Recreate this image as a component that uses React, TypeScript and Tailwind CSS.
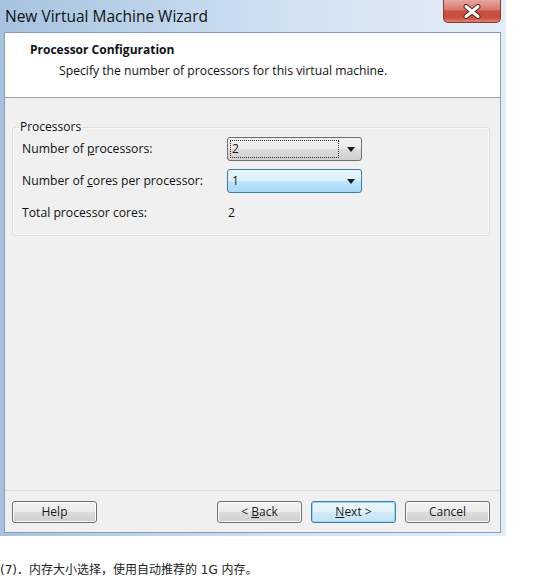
import React from 'react';

const uiFont = { fontFamily: '"Open Sans", "Noto Sans", sans-serif' };

const Arrow: React.FC = () => (
  <svg width="8" height="5" viewBox="0 0 8 5" className="shrink-0">
    <path d="M0 0h8L4 5z" fill="#1a1a1a" />
  </svg>
);

interface ComboProps {
  value: string;
  hot?: boolean;
  focused?: boolean;
}

const Combo: React.FC<ComboProps> = ({ value, hot, focused }) => (
  <div
    className={`w-[135px] h-[24px] rounded-[3px] border flex items-center pl-[2px] pr-[6px] ${
      hot
        ? 'border-[#3c7fb1] bg-[linear-gradient(#eaf6fd_0%,#d9f0fc_50%,#bee6fd_50%,#a7d9f5_100%)]'
        : 'border-[#707070] bg-[linear-gradient(#f2f2f2_0%,#ebebeb_50%,#dddddd_50%,#cfcfcf_100%)]'
    }`}
  >
    <div
      className={`flex-1 h-[18px] flex items-center pl-[1px] mr-[8px] ${
        focused ? 'border border-dotted border-[#333]' : 'border border-transparent'
      }`}
    >
      <span className="text-[12px] leading-none text-[#1a1a1a]">{value}</span>
    </div>
    <Arrow />
  </div>
);

interface ButtonProps {
  children: React.ReactNode;
  isDefault?: boolean;
}

const WinButton: React.FC<ButtonProps> = ({ children, isDefault }) => (
  <button
    className={`w-[85px] h-[22px] rounded-[3px] border text-[12px] leading-none text-[#1a1a1a] ${
      isDefault
        ? 'border-[#3c7fb1] bg-[linear-gradient(#eaf6fd_0%,#e3f2fb_50%,#d2ebf8_50%,#c4e3f4_100%)] shadow-[inset_0_0_0_1px_#9fd5f1]'
        : 'border-[#707070] bg-[linear-gradient(#f2f2f2_0%,#ebebeb_50%,#dddddd_50%,#cfcfcf_100%)] shadow-[inset_0_0_0_1px_#fcfcfc]'
    }`}
  >
    {children}
  </button>
);

const CloseButton: React.FC = () => (
  <div className="w-[58px] h-[23px] rounded-b-[5px] border border-t-0 border-[#8a3a33] bg-[linear-gradient(#e8a89f_0%,#d7776b_45%,#c74f3f_50%,#c9503f_80%,#e08070_100%)] flex items-center justify-center">
    <svg width="18" height="15" viewBox="0 0 18 15">
      <path d="M3 2.5L15 12.5M15 2.5L3 12.5" stroke="#5a2520" strokeWidth="5" strokeLinecap="round" />
      <path d="M3 2.5L15 12.5M15 2.5L3 12.5" stroke="#ffffff" strokeWidth="3" strokeLinecap="round" />
    </svg>
  </div>
);

const App: React.FC = () => {
  return (
    <div className="w-[554px] h-[582px] bg-white overflow-hidden" style={uiFont}>
      {/* Window frame */}
      <div className="w-[506px] h-[536px] flex flex-col pl-[4px] pr-[5px] pb-[3px] bg-[linear-gradient(90deg,#a6c2df_0%,#bcd3ea_30%,#d3e3f2_60%,#e2edf8_100%)]">
        {/* Title bar */}
        <div className="h-[32px] flex justify-between shrink-0">
          <div className="pl-[1px] pt-[6px] text-[15.5px] leading-[20px] text-[#111]">
            New Virtual Machine Wizard
          </div>
          <CloseButton />
        </div>

        {/* Client area */}
        <div className="flex-1 flex flex-col border border-[#8b9db2] bg-[#f0f0f0]">
          {/* Header */}
          <div className="h-[65px] bg-white border-b border-[#a0a0a0] pt-[9px] shrink-0">
            <div className="pl-[25px] text-[12px] leading-[16px] font-bold text-[#111]">
              Processor Configuration
            </div>
            <div className="pl-[54px] mt-[5px] text-[12.2px] leading-[16px] text-[#111]">
              Specify the number of processors for this virtual machine.
            </div>
          </div>

          {/* Body */}
          <div className="flex-1 pt-[21px] pl-[7px] pr-[10px]">
            <fieldset className="border border-[#d5dfe5] rounded-[3px] pt-[2px] pb-[10px] shadow-[inset_0_0_0_1px_#fafafa]">
              <legend className="ml-[6px] px-[1px] text-[12px] leading-[16px] text-[#111]">
                Processors
              </legend>
              <div className="flex flex-col gap-[8px] pl-[9px] text-[12.2px] text-[#111]">
                <div className="flex items-center h-[24px]">
                  <span className="w-[205px]">
                    Number of <span className="underline">p</span>rocessors:
                  </span>
                  <Combo value="2" focused />
                </div>
                <div className="flex items-center h-[24px]">
                  <span className="w-[205px]">
                    Number of <span className="underline">c</span>ores per processor:
                  </span>
                  <Combo value="1" hot />
                </div>
                <div className="flex items-center h-[24px]">
                  <span className="w-[206px]">Total processor cores:</span>
                  <span>2</span>
                </div>
              </div>
            </fieldset>
          </div>

          {/* Footer */}
          <div className="h-[42px] border-t border-[#d5dfe5] shrink-0 flex items-start pt-[10px] pl-[7px] pr-[10px]">
            <WinButton>Help</WinButton>
            <div className="flex-1" />
            <div className="flex gap-[9px]">
              <WinButton>
                &lt; <span className="underline">B</span>ack
              </WinButton>
              <WinButton isDefault>
                <span className="underline">N</span>ext &gt;
              </WinButton>
              <WinButton>Cancel</WinButton>
            </div>
          </div>
        </div>
      </div>

      <div
        className="mt-[27px] text-[12px] leading-[14px] text-[#222]"
        style={{ fontFamily: 'Verdana, "DejaVu Sans", "Noto Sans CJK SC", sans-serif' }}
      >
        (7)．内存大小选择，使用自动推荐的 1G 内存。
      </div>
    </div>
  );
};

export default App;
